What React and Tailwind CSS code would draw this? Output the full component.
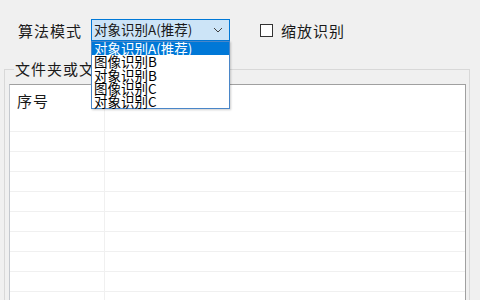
const options = ["对象识别A(推荐)", "图像识别B", "对象识别B", "图像识别C", "对象识别C"];
const rows = Array.from({ length: 9 });

function Chevron() {
  return (
    <svg width="10" height="6" viewBox="0 0 10 6" className="text-[#404040]">
      <path d="M1 1l4 4 4-4" fill="none" stroke="currentColor" strokeWidth="1" />
    </svg>
  );
}

export default function App() {
  return (
    <div
      className="w-[480px] h-[300px] bg-[#f0f0f0] overflow-hidden text-[#1a1a1a]"
      style={{ fontFamily: '"Noto Sans CJK SC", "Noto Sans", sans-serif' }}
    >
      <div className="pt-[19px] pl-[18px] flex items-center h-[41px]">
        <span className="w-[73px] text-[15px] tracking-[1px] leading-none">算法模式</span>

        <div className="relative w-[139px] h-[22px]">
          <div className="h-full flex items-center justify-between pl-[2px] pr-[6px] bg-[#cce4f7] border border-[#0078d7]">
            <span className="text-[13.5px] leading-none">对象识别A(推荐)</span>
            <Chevron />
          </div>
          <div className="absolute z-10 left-0 top-full w-[139px] bg-white border border-[#4a86c8] shadow-[1px_1px_2px_rgba(0,0,0,0.2)]">
            {options.map((opt, i) => (
              <div
                key={opt}
                className={`pl-[2px] text-[13.5px] h-[13.3px] leading-[13px] whitespace-nowrap ${
                  i === 0 ? "bg-[#0078d7] text-white" : "text-black"
                }`}
              >
                {opt}
              </div>
            ))}
          </div>
        </div>

        <div className="ml-[30px] flex items-center">
          <span className="w-[13px] h-[13px] border border-[#333] bg-white" />
          <span className="ml-[8px] text-[15px] tracking-[1px] leading-none">缩放识别</span>
        </div>
      </div>

      <div className="relative mt-[28px] ml-[4px] w-[466px] h-[240px] border-l border-t border-r border-[#d8d8d8]">
        <span className="absolute -top-[10px] left-[9px] px-[1px] bg-[#f0f0f0] text-[15px] tracking-[1px] leading-[18px]">
          文件夹或文件
        </span>

        <div className="mt-[14px] ml-[4px] w-[457px] h-[230px] bg-white border border-[#a0a0a0] border-l-[#c4c8ce]">
          <div className="flex h-[47px] border-b border-[#f0f0f0]">
            <div className="w-[95px] border-r border-[#f0f0f0] pl-[7px] pt-[5px] text-[15px] tracking-[1px]">
              序号
            </div>
            <div className="flex-1" />
          </div>
          {rows.map((_, i) => (
            <div key={i} className="flex h-[20px] border-b border-[#f0f0f0]">
              <div className="w-[95px] border-r border-[#f0f0f0]" />
              <div className="flex-1" />
            </div>
          ))}
        </div>
      </div>
    </div>
  );
}
